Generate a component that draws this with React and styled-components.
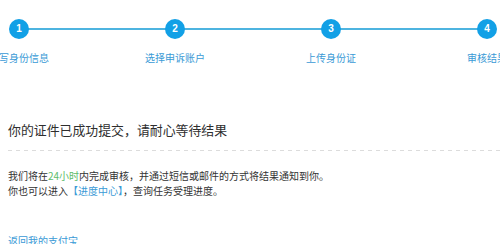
import styled, { createGlobalStyle } from 'styled-components';

const GlobalStyle = createGlobalStyle`
html, body {
    margin: 0;
    padding: 0;
    background: #fff;
    overflow: hidden;
}
body {
    font-family: "Noto Sans CJK SC", "Liberation Sans", sans-serif;
    color: #333;
}
`;

const Page = styled.div`
width: 500px;
height: 244px;
overflow: hidden;
`;

const StepTrack = styled.ol`
position: relative;
display: flex;
margin: 0 0 0 -59px;
padding: 19px 0 0;
list-style: none;
width: 624px;

&::before {
    content: "";
    position: absolute;
    left: 78px;
    right: 78px;
    top: 28px;
    height: 2px;
    background: #4db4e0;
}
`;

const Step = styled.li`
flex: 0 0 156px;
display: flex;
flex-direction: column;
align-items: center;
`;

const Dot = styled.span`
position: relative;
z-index: 1;
width: 20px;
height: 20px;
border-radius: 50%;
background: #12a0e6;
color: #fff;
font: bold 10px/20px "Liberation Sans", Arial, sans-serif;
text-align: center;
`;

const StepLabel = styled.span`
margin-top: 12px;
font-size: 10px;
line-height: 14px;
color: #3a9ad6;
white-space: nowrap;
`;

const Content = styled.section`
padding: 0 0 0 8px;
`;

const Title = styled.h2`
margin: 55px 0 0;
font-size: 12.9px;
font-weight: normal;
line-height: 20px;
color: #2e2e2e;
white-space: nowrap;
`;

const Divider = styled.div`
height: 1px;
margin: 10px 0 0;
background: repeating-linear-gradient(to right, #dcdcdc 0 4px, transparent 4px 8px);
`;

const Notice = styled.p`
margin: 17px 0 0;
font-size: 10px;
line-height: 15px;
color: #333;
white-space: nowrap;
`;

const Mark = styled.span`
color: ${p => (p.$tone === 'green' ? '#5dbb6a' : '#3a9ad6')};
`;

const BackLink = styled.a`
display: block;
margin-top: 36px;
font-size: 10px;
line-height: 14px;
color: #3a9ad6;
text-decoration: none;
`;

const steps = ['填写身份信息', '选择申诉账户', '上传身份证', '审核结果'];

export default function App() {
    return (
        <Page>
            <GlobalStyle />
            <StepTrack>
                {steps.map((label, i) => (
                    <Step key={label}>
                        <Dot>{i + 1}</Dot>
                        <StepLabel>{label}</StepLabel>
                    </Step>
                ))}
            </StepTrack>
            <Content>
                <Title>你的证件已成功提交，请耐心等待结果</Title>
                <Divider />
                <Notice>
                    我们将在<Mark $tone="green">24小时</Mark>内完成审核，并通过短信或邮件的方式将结果通知到你。
                    <br />
                    你也可以进入<Mark>【进度中心】</Mark>，查询任务受理进度。
                </Notice>
                <BackLink href="#">返回我的支付宝</BackLink>
            </Content>
        </Page>
    );
}
